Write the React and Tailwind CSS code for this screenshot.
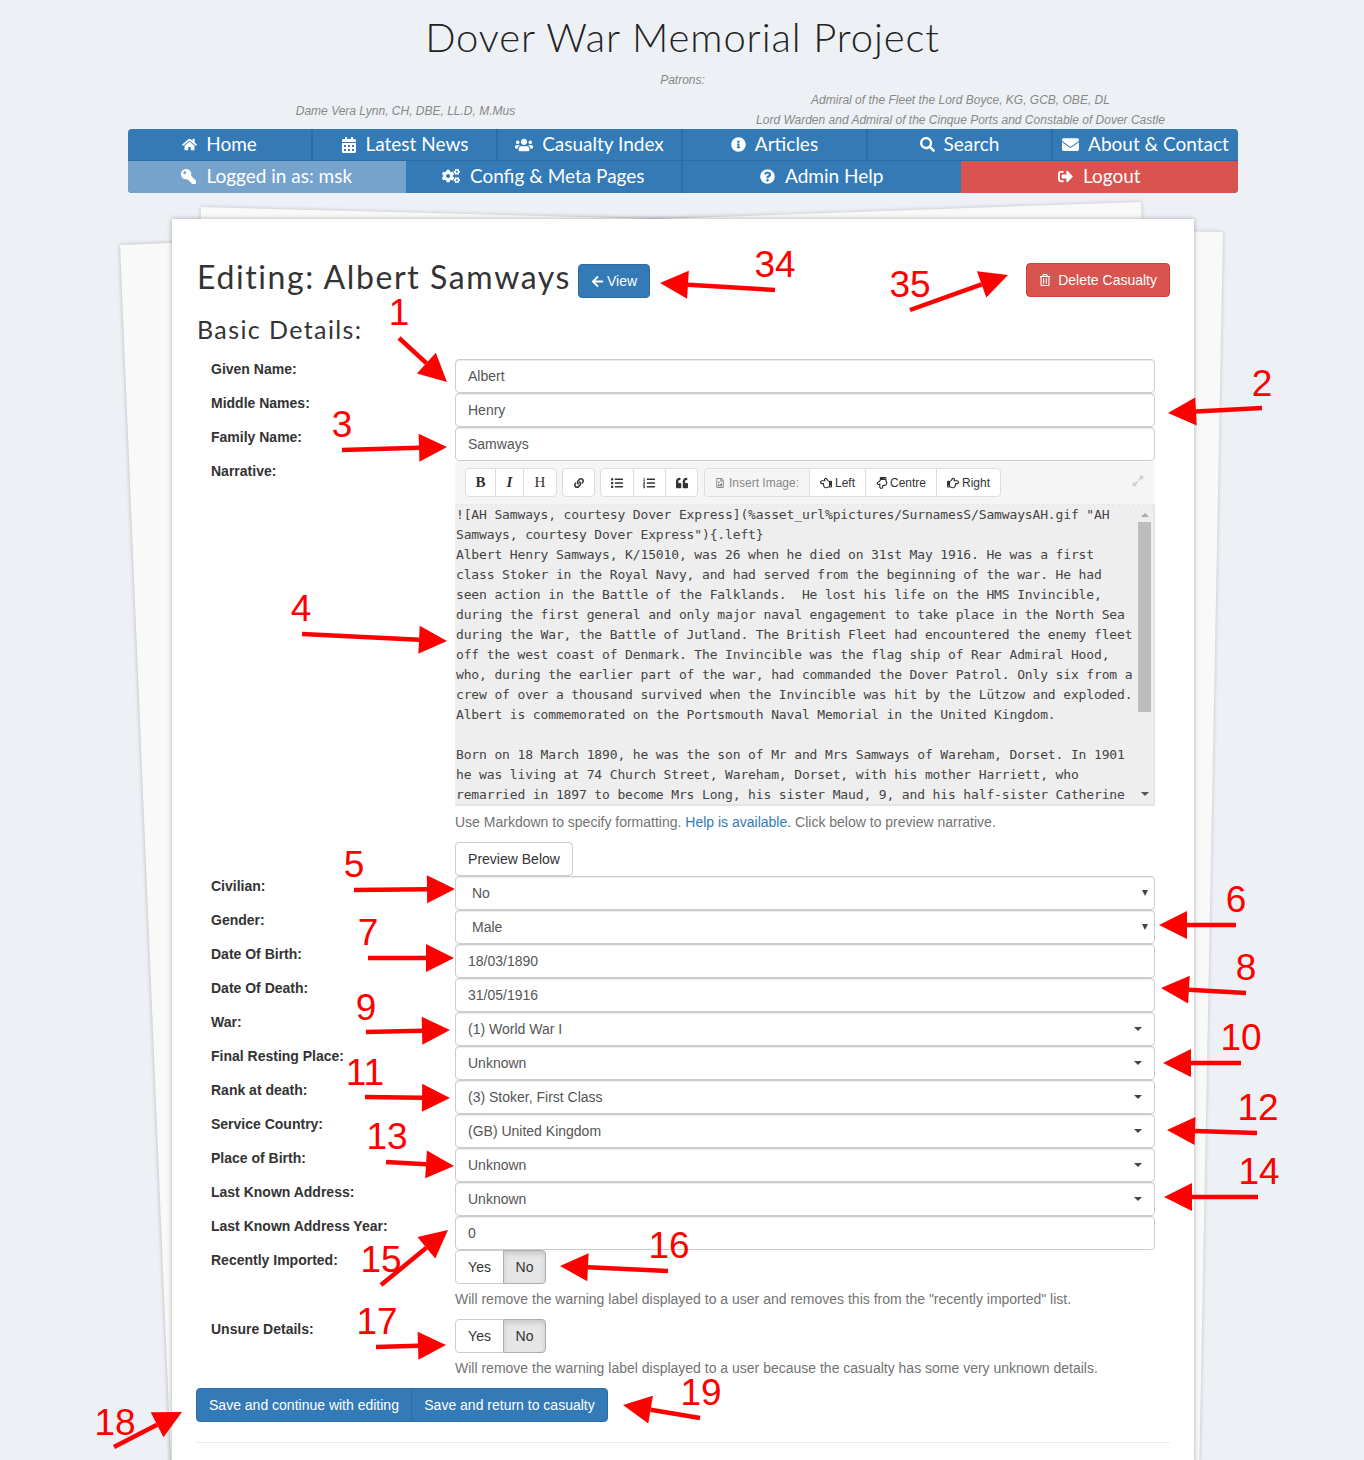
import {
  FaHome, FaCalendarAlt, FaUsers, FaInfoCircle, FaSearch, FaEnvelope, FaKey, FaCogs, FaQuestionCircle,
  FaSignOutAlt, FaArrowLeft, FaRegTrashAlt, FaLink, FaList, FaListOl, FaQuoteLeft, FaRegFileImage,
  FaRegHandPointLeft, FaRegHandPointDown, FaRegHandPointRight, FaExpandAlt,
} from 'react-icons/fa';

const DISPLAY = "font-['Lato',sans-serif]";

const NAV_TOP = [
  { label: 'Home', icon: FaHome, size: 'size-[15px]' },
  { label: 'Latest News', icon: FaCalendarAlt, size: 'size-[16px]' },
  { label: 'Casualty Index', icon: FaUsers, size: 'size-[18px]' },
  { label: 'Articles', icon: FaInfoCircle, size: 'size-[15px]' },
  { label: 'Search', icon: FaSearch, size: 'size-[15px]' },
  { label: 'About & Contact', icon: FaEnvelope, size: 'size-[17px]' },
];

const NARRATIVE = [
  '![AH Samways, courtesy Dover Express](%asset_url%pictures/SurnamesS/SamwaysAH.gif "AH',
  'Samways, courtesy Dover Express"){.left}',
  'Albert Henry Samways, K/15010, was 26 when he died on 31st May 1916. He was a first',
  'class Stoker in the Royal Navy, and had served from the beginning of the war. He had',
  'seen action in the Battle of the Falklands.  He lost his life on the HMS Invincible,',
  'during the first general and only major naval engagement to take place in the North Sea',
  'during the War, the Battle of Jutland. The British Fleet had encountered the enemy fleet',
  'off the west coast of Denmark. The Invincible was the flag ship of Rear Admiral Hood,',
  'who, during the earlier part of the war, had commanded the Dover Patrol. Only six from a',
  'crew of over a thousand survived when the Invincible was hit by the Lützow and exploded.',
  'Albert is commemorated on the Portsmouth Naval Memorial in the United Kingdom.',
  ' ',
  'Born on 18 March 1890, he was the son of Mr and Mrs Samways of Wareham, Dorset. In 1901',
  'he was living at 74 Church Street, Wareham, Dorset, with his mother Harriett, who',
  'remarried in 1897 to become Mrs Long, his sister Maud, 9, and his half-sister Catherine',
];

const ARROWS = [
  { n: '1', from: [399, 338], to: [447, 382], at: [399, 313] },
  { n: '2', from: [1262, 408], to: [1168, 413], at: [1262, 384] },
  { n: '3', from: [342, 450], to: [447, 447], at: [342, 425] },
  { n: '4', from: [302, 634], to: [447, 641], at: [301, 609] },
  { n: '5', from: [354, 890], to: [455, 889], at: [354, 865] },
  { n: '6', from: [1236, 925], to: [1159, 925], at: [1236, 900] },
  { n: '7', from: [368, 958], to: [454, 958], at: [368, 933] },
  { n: '8', from: [1246, 993], to: [1161, 988], at: [1246, 968] },
  { n: '9', from: [366, 1032], to: [450, 1030], at: [366, 1008] },
  { n: '10', from: [1241, 1063], to: [1163, 1063], at: [1241, 1038] },
  { n: '11', from: [365, 1097], to: [450, 1098], at: [365, 1073] },
  { n: '12', from: [1257, 1133], to: [1167, 1130], at: [1258, 1108] },
  { n: '13', from: [386, 1162], to: [454, 1166], at: [387, 1137] },
  { n: '14', from: [1258, 1197], to: [1164, 1197], at: [1259, 1172] },
  { n: '15', from: [381, 1285], to: [448, 1230], at: [381, 1260] },
  { n: '16', from: [668, 1271], to: [560, 1266], at: [669, 1246] },
  { n: '17', from: [376, 1347], to: [446, 1345], at: [377, 1322] },
  { n: '18', from: [114, 1447], to: [182, 1412], at: [115, 1423] },
  { n: '19', from: [700, 1418], to: [623, 1405], at: [701, 1393] },
  { n: '34', from: [775, 290], to: [660, 283], at: [775, 265] },
  { n: '35', from: [910, 310], to: [1008, 275], at: [910, 285] },
];

function Arrow({ from, to }) {
  const dx = to[0] - from[0];
  const dy = to[1] - from[1];
  const len = Math.hypot(dx, dy);
  const ux = dx / len;
  const uy = dy / len;
  const baseX = to[0] - ux * 28;
  const baseY = to[1] - uy * 28;
  const points = [
    `${to[0]},${to[1]}`,
    `${baseX - uy * 14},${baseY + ux * 14}`,
    `${baseX + uy * 14},${baseY - ux * 14}`,
  ].join(' ');
  return (
    <>
      <line x1={from[0]} y1={from[1]} x2={baseX} y2={baseY} stroke="#ff0000" strokeWidth="4.5" />
      <polygon points={points} fill="#ff0000" />
    </>
  );
}

function Row({ label, children }) {
  return (
    <div className="flex">
      <div className="w-[259px] pl-[15px] text-sm leading-5 font-bold text-[#333]">{label}</div>
      <div className="w-[700px]">{children}</div>
    </div>
  );
}

function TextField({ value, caret, native }) {
  return (
    <div className={`flex h-[34px] items-center justify-between rounded border border-[#ccc] bg-white text-sm text-[#555] shadow-[inset_0_1px_1px_rgba(0,0,0,0.075)] ${native ? 'pl-4 pr-[6px]' : 'pl-3 pr-3'}`}>
      <span>{value}</span>
      {caret && <span className="h-0 w-0 border-x-4 border-t-4 border-x-transparent border-t-[#444]" />}
      {native && <span className="h-0 w-0 border-x-[3px] border-t-[6px] border-x-transparent border-t-[#444]" />}
    </div>
  );
}

function YesNo() {
  return (
    <div className="flex h-[34px] w-[91px] text-sm text-[#333]">
      <div className="flex w-[49px] items-center justify-center rounded-l border border-[#ccc] bg-white">Yes</div>
      <div className="-ml-px flex w-[43px] items-center justify-center rounded-r border border-[#adadad] bg-[#e6e6e6] shadow-[inset_0_3px_5px_rgba(0,0,0,0.125)]">No</div>
    </div>
  );
}

function ToolButton({ className, children }) {
  return <div className={`flex h-full items-center justify-center border-r border-[#ddd] last:border-r-0 ${className}`}>{children}</div>;
}

function ToolGroup({ className, children }) {
  return <div className={`flex h-[29px] rounded border border-[#ddd] bg-white text-[#333] ${className}`}>{children}</div>;
}

function Toolbar() {
  return (
    <div className="flex h-[44px] items-center justify-between rounded-t border-x border-b border-dashed border-[#e5e5e5] border-x-transparent bg-[#f5f5f5] pl-[9px] pr-[10px]">
      <div className="flex gap-[5px]">
        <ToolGroup className="w-[92px] font-['Liberation_Serif',serif] text-[15px]">
          <ToolButton className="w-[30px] font-bold">B</ToolButton>
          <ToolButton className="w-[28px] font-bold italic">I</ToolButton>
          <ToolButton className="w-[32px]">H</ToolButton>
        </ToolGroup>
        <ToolGroup className="w-[33px]">
          <ToolButton className="w-full"><FaLink className="size-[10px]" /></ToolButton>
        </ToolGroup>
        <ToolGroup className="w-[98px]">
          <ToolButton className="w-[33px]"><FaList className="size-3" /></ToolButton>
          <ToolButton className="w-[33px]"><FaListOl className="size-3" /></ToolButton>
          <ToolButton className="w-[31px]"><FaQuoteLeft className="size-3" /></ToolButton>
        </ToolGroup>
        <ToolGroup className="ml-px w-[297px] text-xs">
          <ToolButton className="w-[105px] gap-1 rounded-l bg-[#f5f5f5] text-[#888]"><FaRegFileImage className="size-[10px]" />Insert Image:</ToolButton>
          <ToolButton className="w-[56px] gap-[3px]"><FaRegHandPointLeft className="size-3" />Left</ToolButton>
          <ToolButton className="w-[71px] gap-[2px]"><FaRegHandPointDown className="size-3" />Centre</ToolButton>
          <ToolButton className="w-[63px] gap-[3px]"><FaRegHandPointRight className="size-3" />Right</ToolButton>
        </ToolGroup>
      </div>
      <FaExpandAlt className="mb-1 size-3 text-[#ccc]" />
    </div>
  );
}

function NarrativeBox() {
  return (
    <div className="relative h-[301px] overflow-hidden border-b-2 border-r-2 border-[#e5e5e5] bg-[#eee] pl-px">
      <div className="whitespace-pre font-['DejaVu_Sans_Mono',monospace] text-[13px] leading-5 tracking-[-0.14px] text-[#444]">
        {NARRATIVE.map((line, i) => <div key={i}>{line}</div>)}
      </div>
      <div className="absolute inset-y-0 right-0 flex w-[17px] flex-col items-center justify-between bg-[#eeeeee] py-[8px]">
        <span className="h-0 w-0 border-x-[4px] border-b-[4px] border-x-transparent border-b-[#aaa]" />
        <span className="h-0 w-0 border-x-[4px] border-t-[4px] border-x-transparent border-t-[#555]" />
      </div>
      <div className="absolute right-[2px] top-[17px] h-[190px] w-[13px] bg-[#bdbdbd]" />
    </div>
  );
}

function BlueButton({ className, children }) {
  return <div className={`flex items-center border border-[#2e6da4] bg-[#337ab7] text-sm text-white ${className}`}>{children}</div>;
}

export default function App() {
  return (
    <div className="relative h-[1460px] overflow-hidden bg-[#edf0f5] font-['Liberation_Sans',Arial,sans-serif]">
      <h1 className={`ml-[1px] pt-[12px] text-center text-[40px] leading-[50px] font-light tracking-[0.9px] text-[#222] ${DISPLAY}`}>
        Dover War Memorial Project
      </h1>
      <p className="ml-[1px] mt-[8px] text-center text-xs leading-5 italic text-[#888]">Patrons:</p>

      <div className="ml-[128px] w-[1110px]">
        <div className="grid h-[39px] grid-cols-2 text-center text-xs italic leading-5 text-[#888]">
          <div className="flex items-center justify-center pt-px">Dame Vera Lynn, CH, DBE, LL.D, M.Mus</div>
          <div>
            <div>Admiral of the Fleet the Lord Boyce, KG, GCB, OBE, DL</div>
            <div>Lord Warden and Admiral of the Cinque Ports and Constable of Dover Castle</div>
          </div>
        </div>

        <nav className={`text-[19px] text-white ${DISPLAY}`}>
          <div className="grid h-[32px] grid-cols-6 overflow-hidden rounded-t border-b border-[#2e6da4] bg-[#337ab7]">
            {NAV_TOP.map(({ label, icon: Icon, size }) => (
              <div key={label} className="flex items-center justify-center gap-[9px] border-r-2 border-[#2e6da4] last:border-r-0">
                <Icon className={size} />
                <span>{label}</span>
              </div>
            ))}
          </div>
          <div className="grid h-[32px] grid-cols-4 overflow-hidden rounded-b bg-[#337ab7]">
            <div className="flex items-center justify-center gap-[10px] bg-[#75a3cc] pb-[2px]">
              <FaKey className="size-[15px] -scale-x-100" />
              <span>Logged in as: msk</span>
            </div>
            <div className="flex items-center justify-center gap-[10px] border-r-2 border-[#2e6da4] pb-[2px]">
              <FaCogs className="size-[18px]" />
              <span>Config &amp; Meta Pages</span>
            </div>
            <div className="flex items-center justify-center gap-[10px] pb-[2px]">
              <FaQuestionCircle className="size-[15px]" />
              <span>Admin Help</span>
            </div>
            <div className="flex items-center justify-center gap-[10px] bg-[#d9534f] pb-[2px]">
              <FaSignOutAlt className="size-[15px]" />
              <span>Logout</span>
            </div>
          </div>
        </nav>
      </div>

      <div className="relative ml-[172px] mt-[26px] w-[1022px]">
        <div className="absolute -left-[52px] top-[26px] h-[1400px] w-[200px] origin-top-left -rotate-[2.4deg] bg-[#f9f9f9] shadow-[0_0_4px_rgba(0,0,0,0.25)]" />
        <div className="absolute left-[851px] top-[13px] h-[1400px] w-[200px] origin-top-right rotate-[1.1deg] bg-[#f9f9f9] shadow-[0_0_4px_rgba(0,0,0,0.2)]" />
        <div className="absolute left-[29px] -top-[12px] h-[300px] w-[900px] origin-top-left rotate-[1.5deg] bg-[#f9f9f9] shadow-[0_0_4px_rgba(0,0,0,0.2)]" />
        <div className="absolute left-[69px] -top-[17px] h-[300px] w-[900px] origin-top-right -rotate-[2deg] bg-[#f9f9f9] shadow-[0_0_4px_rgba(0,0,0,0.2)]" />

        <main className="relative h-[1300px] bg-white px-6 pt-[44px] shadow-[0_0_5px_rgba(0,0,0,0.3)]">
          <div className="flex h-[34px] items-center">
            <h2 className={`pb-[6px] pl-px text-[32px] leading-[24px] tracking-[1.6px] text-[#333] ${DISPLAY}`}>Editing: Albert Samways</h2>
            <BlueButton className="ml-[7px] mt-[2px] h-[34px] w-[72px] justify-center gap-[3px] rounded">
              <FaArrowLeft className="size-[13px]" />View
            </BlueButton>
            <div className="ml-auto flex h-[34px] items-center gap-[7px] rounded border border-[#d43f3a] bg-[#d9534f] px-3 text-sm text-white">
              <FaRegTrashAlt className="size-3" />Delete Casualty
            </div>
          </div>

          <h3 className={`mt-[15px] h-[47px] w-fit pl-px text-[25px] leading-[34px] tracking-[1.4px] text-[#333] ${DISPLAY}`}>Basic Details:</h3>

          <Row label="Given Name:"><TextField value="Albert" /></Row>
          <Row label="Middle Names:"><TextField value="Henry" /></Row>
          <Row label="Family Name:"><TextField value="Samways" /></Row>
          <Row label="Narrative:">
            <Toolbar />
            <NarrativeBox />
            <p className="mt-[6px] text-sm leading-5 text-[#737373]">
              Use Markdown to specify formatting. <span className="text-[#337ab7]">Help is available.</span> Click below to preview narrative.
            </p>
            <div className="mt-[10px] flex h-[34px] w-[118px] items-center justify-center rounded border border-[#ccc] bg-white text-sm text-[#333]">Preview Below</div>
          </Row>
          <Row label="Civilian:"><TextField value="No" native /></Row>
          <Row label="Gender:"><TextField value="Male" native /></Row>
          <Row label="Date Of Birth:"><TextField value="18/03/1890" /></Row>
          <Row label="Date Of Death:"><TextField value="31/05/1916" /></Row>
          <Row label="War:"><TextField value="(1) World War I" caret /></Row>
          <Row label="Final Resting Place:"><TextField value="Unknown" caret /></Row>
          <Row label="Rank at death:"><TextField value="(3) Stoker, First Class" caret /></Row>
          <Row label="Service Country:"><TextField value="(GB) United Kingdom" caret /></Row>
          <Row label="Place of Birth:"><TextField value="Unknown" caret /></Row>
          <Row label="Last Known Address:"><TextField value="Unknown" caret /></Row>
          <Row label="Last Known Address Year:"><TextField value="0" /></Row>
          <Row label="Recently Imported:">
            <YesNo />
            <p className="mt-[5px] text-sm leading-5 text-[#737373]">Will remove the warning label displayed to a user and removes this from the "recently imported" list.</p>
            <div className="h-[10px]" />
          </Row>
          <Row label="Unsure Details:">
            <YesNo />
            <p className="mt-[5px] text-sm leading-5 text-[#737373]">Will remove the warning label displayed to a user because the casualty has some very unknown details.</p>
          </Row>

          <div className="mt-[10px] flex h-[34px]">
            <BlueButton className="w-[216px] justify-center rounded-l">Save and continue with editing</BlueButton>
            <BlueButton className="-ml-px w-[197px] justify-center rounded-r">Save and return to casualty</BlueButton>
          </div>
          <hr className="mt-[20px] border-[#eee]" />
        </main>
      </div>

      <svg className="pointer-events-none absolute left-0 top-0" width="1364" height="1460">
        {ARROWS.map((a) => <Arrow key={a.n} from={a.from} to={a.to} />)}
      </svg>
      {ARROWS.map((a) => (
        <span
          key={a.n}
          className="absolute -translate-x-1/2 -translate-y-1/2 text-[37px] leading-[30px] text-[#ff0000]"
          style={{ left: a.at[0], top: a.at[1] }}
        >
          {a.n}
        </span>
      ))}
    </div>
  );
}
